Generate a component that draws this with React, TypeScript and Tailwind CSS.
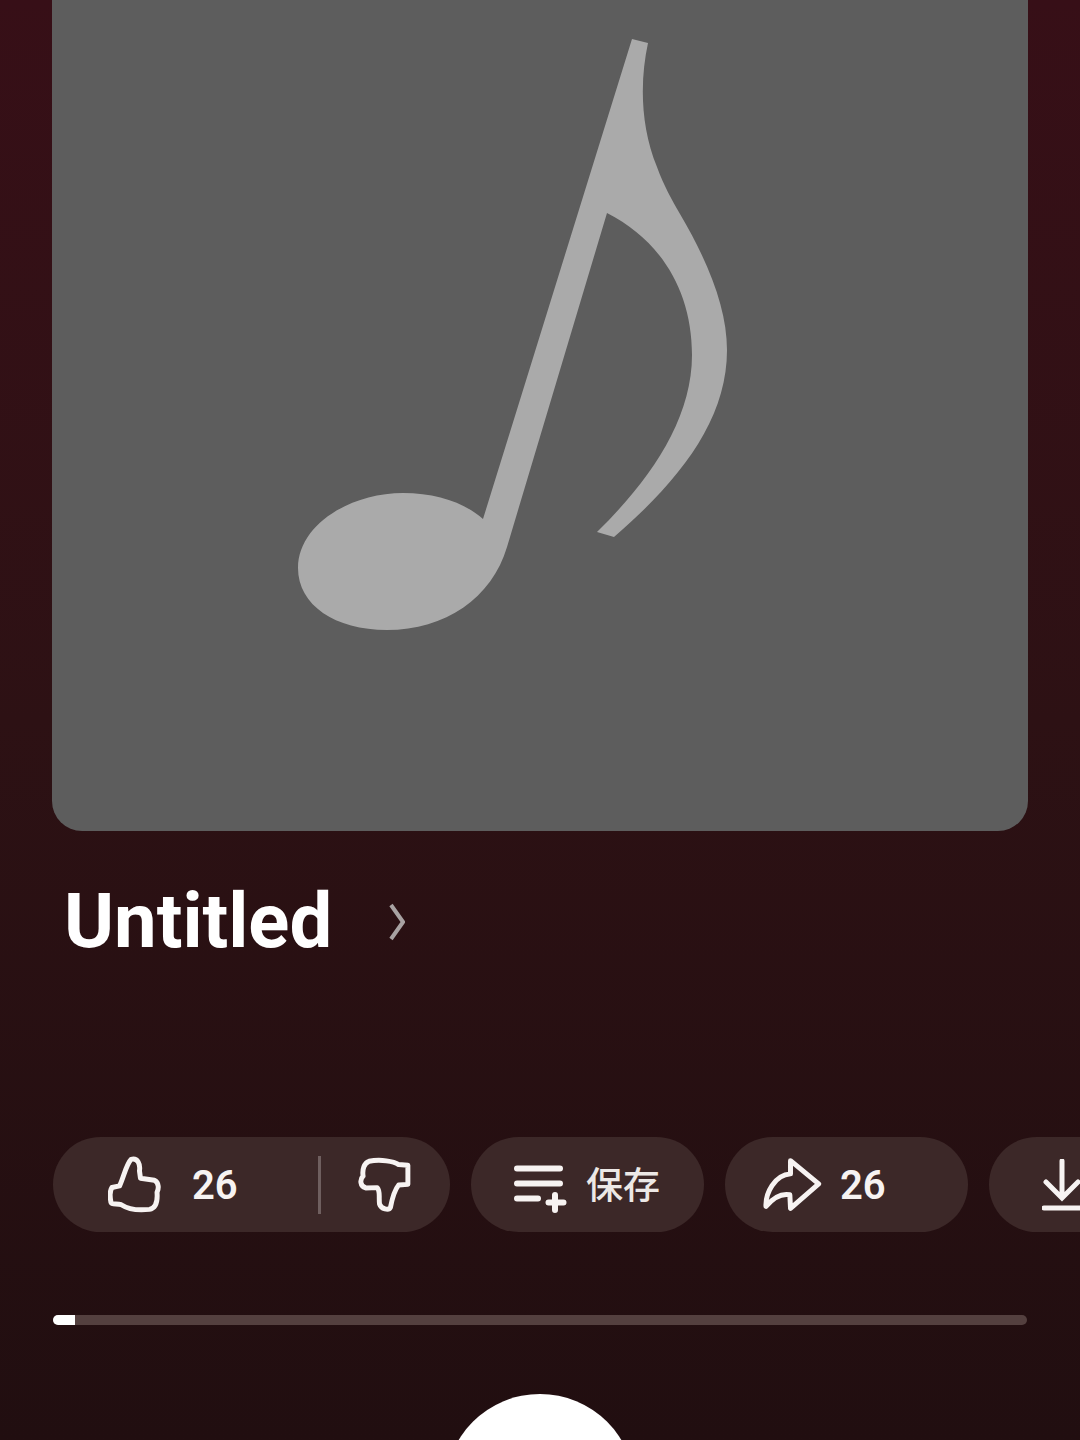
const ThumbUp = () => (
  <svg width="53" height="58" viewBox="200 105 160 175" fill="none" stroke="#f7f3f2" strokeWidth="15" strokeLinejoin="round">
    <path d="M212 200 L235 195 C247 170 255 130 270 115 C290 110 298 130 295 150 L298 172 L340 178 C355 185 353 205 348 215 C350 240 345 262 325 266 C290 270 260 265 240 252 C225 248 212 253 209 245 C205 225 205 210 212 200 Z" />
  </svg>
);

const ThumbDown = () => (
  <svg width="53" height="56" viewBox="952 112 160 170" fill="none" stroke="#f7f3f2" strokeWidth="15" strokeLinejoin="round">
    <path d="M985 125 C1020 118 1060 125 1075 135 L1103 137 L1103 195 L1075 197 C1060 215 1055 240 1050 265 C1045 275 1022 270 1017 255 C1014 235 1020 215 1010 205 L975 206 C957 200 957 180 967 170 C964 150 970 130 985 125 Z" />
  </svg>
);

const SaveIcon = () => (
  <svg width="54" height="57" viewBox="0 0 54 57" fill="none" stroke="#f7f3f2" strokeWidth="6" strokeLinecap="round">
    <path d="M3 12.5 H46 M3 27.5 H46 M3 42.5 H24 M41 39 V54 M34.5 46.5 H49.5" />
  </svg>
);

const ShareIcon = () => (
  <svg width="59" height="53" viewBox="35 25 178 158" fill="none" stroke="#f7f3f2" strokeWidth="15" strokeLinejoin="round">
    <path d="M118 32 L203 102 L118 176 L116 135 C90 130 65 145 44 170 C42 130 70 75 118 72 Z" />
  </svg>
);

const DownloadIcon = () => (
  <svg width="40" height="52" viewBox="0 0 40 52" fill="none" stroke="#f7f3f2" strokeWidth="5" strokeLinecap="round" className="shrink-0">
    <path d="M20 2 V38 M4 23 L20 39 L36 23 M2 49 H60" />
  </svg>
);

export default function App() {
  return (
    <div className="flex h-[1440px] w-[1080px] flex-col overflow-hidden bg-gradient-to-b from-[#370f17] via-[#2d1114] to-[#210e10] font-['Roboto',sans-serif]">
      <div className="mx-[52px] flex h-[831px] shrink-0 rounded-b-[30px] bg-[#5d5d5d]">
        <svg width="976" height="831" viewBox="52 0 976 831">
          <path
            fill="#aaaaaa"
            d="M632 39 L648 43 C640 80 640 125 657 167 C664 186 672 200 680 214 C710 265 727 310 727 350 C727 420 680 480 614 537 L597 532 C650 480 692 420 692 355 C692 290 660 240 607 213 L507 547 C492 598 445 630 387 630 C335 630 298 605 298 568 C298 525 350 493 403 493 C437 493 465 503 483 519 Z"
          />
        </svg>
      </div>

      <div className="mt-[47px] flex h-[84px] items-center pl-[64px]">
        <h1 className="mt-[2px] text-[76px] font-bold leading-[84px] text-white">Untitled</h1>
        <svg width="16" height="38" viewBox="0 0 16 38" fill="none" stroke="#a8a2a2" strokeWidth="4" className="ml-[57px] mt-1">
          <path d="M2 2 L14 19 L2 36" />
        </svg>
      </div>

      <div className="mt-[175px] flex gap-[21px] pl-[53px]">
        <div className="flex h-[95px] w-[397px] shrink-0 items-center rounded-full bg-[#3c2828] pl-[55px]">
          <ThumbUp />
          <span className="ml-[31px] mt-[2px] w-[126px] text-[40px] font-semibold text-[#f7f3f2]">26</span>
          <div className="h-[58px] w-[3px] bg-[#6f5f5f]" />
          <div className="ml-[37px]">
            <ThumbDown />
          </div>
        </div>
        <div className="flex h-[95px] w-[233px] shrink-0 items-center rounded-full bg-[#3c2828] pl-[43px]">
          <SaveIcon />
          <span className="-mt-[2px] ml-[18px] font-['Noto_Sans_CJK_SC',sans-serif] text-[37px] font-medium text-[#ece8e6]">保存</span>
        </div>
        <div className="flex h-[95px] w-[243px] shrink-0 items-center rounded-full bg-[#3c2828] pl-[38px]">
          <ShareIcon />
          <span className="ml-[18px] mt-[2px] text-[40px] font-semibold text-[#f7f3f2]">26</span>
        </div>
        <div className="flex h-[95px] w-[200px] shrink-0 items-center rounded-full bg-[#3c2828] pl-[53px]">
          <DownloadIcon />
        </div>
      </div>

      <div className="mx-[53px] mt-[83px] h-[10px] shrink-0 overflow-hidden rounded-full bg-[#54403f]">
        <div className="h-full w-[22px] bg-white" />
      </div>

      <div className="mx-auto mt-[69px] size-[190px] shrink-0 rounded-full bg-white" />
    </div>
  );
}
